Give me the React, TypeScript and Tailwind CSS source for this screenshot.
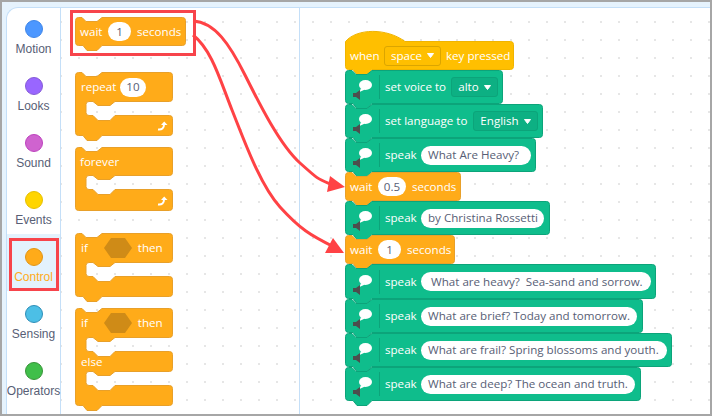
import type { ReactNode } from "react";

const ORANGE = { fill: "#ffab19", stroke: "#e8a02a" };
const GREEN = { fill: "#0fbd8c", stroke: "#0ca47a" };
const YELLOW = { fill: "#ffbf00", stroke: "#f0b400" };

const categories = [
  { label: "Motion", dot: "bg-[#4c97ff] border-[#3f86e8]" },
  { label: "Looks", dot: "bg-[#9966ff] border-[#855cd6]" },
  { label: "Sound", dot: "bg-[#cf63cf] border-[#bd42bd]" },
  { label: "Events", dot: "bg-[#ffd500] border-[#e6bf00]" },
  { label: "Control", dot: "bg-[#ffab19] border-[#e09516]", active: true },
  { label: "Sensing", dot: "bg-[#4cbfe6] border-[#2e8eb8]" },
  { label: "Operators", dot: "bg-[#40bf4a] border-[#389438]" },
];

// sections = arm, gap, arm, gap, arm ... (a plain stack block has a single arm)
function blockPath(w: number, sections: number[], bump: boolean, hat: boolean) {
  const r = 3;
  const x0 = 0.5;
  const right = w - 0.5;
  let d = "";
  let y = 0.5;

  if (hat) {
    y = 10.5;
    d += `M ${x0} ${y} C 12 -3 42 -3 60 ${y} H ${right - r} Q ${right} ${y} ${right} ${y + r} `;
  } else {
    d += `M ${x0} ${y + r} Q ${x0} ${y} ${x0 + r} ${y} H 7 L 11 4.5 H 22 L 27 ${y} H ${right - r} Q ${right} ${y} ${right} ${y + r} `;
  }

  let bottom = 0;
  sections.forEach((s, i) => {
    bottom += s;
    const by = bottom - 0.5;
    const last = i === sections.length - 1;
    if (i % 2 === 0) {
      d += `V ${by - r} Q ${right} ${by} ${right - r} ${by} `;
      if (last) {
        if (bump) d += `H 27 L 22 ${by + 5} H 12 L 8 ${by} `;
        d += `H ${x0 + r} Q ${x0} ${by} ${x0} ${by - r} Z`;
      } else {
        d += `H 40 L 35 ${by + 4} H 23 L 18 ${by} H 14 Q 11 ${by} 11 ${by + r} `;
      }
    } else {
      d += `V ${by - r} Q 11 ${by} 14 ${by} H 18 L 23 ${by + 5} H 35 L 40 ${by} H ${right - r} Q ${right} ${by} ${right} ${by + r} `;
    }
  });
  return d;
}

type BlockProps = {
  w: number;
  sections: number[];
  color: { fill: string; stroke: string };
  bump?: boolean;
  hat?: boolean;
  children?: ReactNode;
};

const Block = ({ w, sections, color, bump = true, hat = false, children }: BlockProps) => {
  const h = sections.reduce((a, b) => a + b, 0);
  return (
    <div className="grid w-fit whitespace-nowrap font-['Open_Sans',sans-serif] text-[11.6px] text-white">
      <svg width={w} height={h} className="col-start-1 row-start-1 block overflow-visible">
        <path d={blockPath(w, sections, bump, hat)} fill={color.fill} stroke={color.stroke} />
      </svg>
      <div className="col-start-1 row-start-1 flex min-w-0 flex-col">{children}</div>
    </div>
  );
};

const Pill = ({ children, className = "" }: { children: ReactNode; className?: string }) => (
  <span className={`flex h-[19px] items-center whitespace-pre rounded-full bg-white text-[#575e75] ${className}`}>
    {children}
  </span>
);

const Caret = () => (
  <svg width="7" height="5" viewBox="0 0 7 5" className="ml-[5px]">
    <path d="M0.5 0.5 H6.5 L3.5 4.5 Z" fill="#fff" stroke="#fff" strokeLinejoin="round" />
  </svg>
);

const Wait = ({ value, w, pill }: { value: string; w: number; pill: string }) => (
  <Block w={w} sections={[29]} color={ORANGE}>
    <div className="flex h-[29px] items-center gap-[6px] pl-[5px]">
      <span className="w-[22px]">wait</span>
      <Pill className={`h-[18px] justify-center ${pill}`}>{value}</Pill>
      <span>seconds</span>
    </div>
  </Block>
);

const SpeechIcon = () => (
  <svg width="35" height="34" className="shrink-0">
    <ellipse cx="20.5" cy="15" rx="6.5" ry="5" fill="#fff" />
    <path d="M16 18 L14.5 22 L20 19.5 Z" fill="#fff" />
    <path d="M8 23 L11 23 L15 20 V30 L11 27 L8 27 Z" fill="#4d4d4d" />
    <line x1="34.5" y1="5" x2="34.5" y2="29" stroke="#0ca47a" />
  </svg>
);

const Speech = ({ w, h = 34, children }: { w: number; h?: number; children: ReactNode }) => (
  <Block w={w} sections={[h]} color={GREEN}>
    <div className="flex h-full items-center gap-[5px]">
      <SpeechIcon />
      {children}
    </div>
  </Block>
);

const Speak = ({ w, h, pill, text }: { w: number; h?: number; pill: string; text: string }) => (
  <Speech w={w} h={h}>
    <span className="w-[31px]">speak</span>
    <Pill className={`pl-[7px] ${pill}`}>{text}</Pill>
  </Speech>
);

const Hexagon = () => (
  <svg width="28" height="20" className="ml-[16px] mr-[6px] shrink-0">
    <path d="M7 0 H21 L28 10 L21 20 H7 L0 10 Z" fill="#cf8b17" />
  </svg>
);

const LoopArrow = () => (
  <svg width="11" height="10" viewBox="0 0 11 10" className="mb-[5px] ml-auto mr-[5px]">
    <path d="M1 8.5 C5 9 7 7 7 3.5" fill="none" stroke="#fff" strokeWidth="2" />
    <path d="M4 4 L7.2 0.5 L10.5 4 Z" fill="#fff" />
  </svg>
);

const Dropdown = ({ label, border, className }: { label: string; border: string; className: string }) => (
  <span className={`flex h-[20px] items-center justify-center rounded-[3px] border ${border} ${className}`}>
    {label}
    <Caret />
  </span>
);

const Arrows = () => (
  <svg width="712" height="416" className="pointer-events-none absolute left-0 top-0">
    <path d="M193 21 C 215 22 230 45 245 75 S 280 145 300 163 S 318 179 333 185" fill="none" stroke="#ff4245" strokeWidth="3" />
    <path d="M345 187 L330 176 L327 192 Z" fill="#ff4245" />
    <path d="M193 35 C 212 50 220 80 232 110 S 260 185 280 207 S 310 235 334 247" fill="none" stroke="#ff4245" strokeWidth="3" />
    <path d="M344 253 L333 238 L325 253 Z" fill="#ff4245" />
  </svg>
);

const App = () => {
  return (
    <div className="relative h-[416px] w-[712px] overflow-hidden border-2 border-[#a6a6a6] bg-[#e6f3fd] pl-[4px] pt-[5px]">
      <div className="flex h-full overflow-hidden rounded-tl-[12px] border-l border-t border-[#c4dff8] bg-white">
        {/* Category sidebar */}
        <ul className="h-full w-[54px] shrink-0 border-r border-[#c4dff8] font-['Liberation_Sans',sans-serif] text-[12px] text-[#575e75]">
          {categories.map((c, i) => (
            <li
              key={c.label}
              className={`relative flex h-[57px] flex-col items-center pt-[14px] ${i === 0 ? "-mt-[2px]" : ""} ${
                c.active ? "bg-[#e3f2fd] text-[#ffab19]" : ""
              }`}
            >
              <span className={`ml-[1px] h-[18px] w-[18px] shrink-0 rounded-full border ${c.dot}`} />
              <span className="mt-[2px] whitespace-nowrap leading-[18px]">{c.label}</span>
              {c.active && <span className="absolute left-[2px] top-[4px] h-[53px] w-[50px] border-[3px] border-[#f7444b]" />}
            </li>
          ))}
        </ul>

        <div className="flex min-w-0 flex-1 bg-[radial-gradient(circle,#e6e6e6_1px,transparent_1.2px)] bg-[size:18px_18px] bg-[position:-9px_5px]">
          {/* Block palette */}
          <div className="w-[239px] shrink-0 border-r border-[#c4dff8] pl-[9px] pt-[2px]">
            <div className="h-[46px] w-[126px] border-[3px] border-[#f7444b] pl-[2px] pt-[4px]">
              <Wait value="1" w={111} pill="w-[23px]" />
            </div>

            <div className="ml-[5px] mt-[16px] flex flex-col">
              <Block w={98} sections={[30, 14, 20]} color={ORANGE}>
                <div className="flex h-[30px] items-center gap-[5px] pl-[6px]">
                  <span className="w-[34px]">repeat</span>
                  <Pill className="h-[18px] w-[26px] justify-center">10</Pill>
                </div>
                <div className="mt-auto flex">
                  <LoopArrow />
                </div>
              </Block>

              <div className="mt-[11px]">
                <Block w={98} sections={[29, 14, 21]} color={ORANGE} bump={false}>
                  <div className="flex h-[29px] items-center pl-[5px]">forever</div>
                  <div className="mt-auto flex">
                    <LoopArrow />
                  </div>
                </Block>
              </div>

              <div className="mt-[22px]">
                <Block w={98} sections={[30, 14, 20]} color={ORANGE}>
                  <div className="flex h-[30px] items-center pl-[6px]">
                    <span>if</span>
                    <Hexagon />
                    <span>then</span>
                  </div>
                </Block>
              </div>

              <div className="mt-[11px]">
                <Block w={98} sections={[30, 14, 20, 14, 20]} color={ORANGE}>
                  <div className="flex h-[30px] items-center pl-[6px]">
                    <span>if</span>
                    <Hexagon />
                    <span>then</span>
                  </div>
                  <div className="mt-[14px] flex h-[20px] items-center pl-[6px]">else</div>
                </Block>
              </div>
            </div>
          </div>

          {/* Script workspace */}
          <div className="flex flex-1 flex-col pl-[45px] pt-[23px]">
            <Block w={169} sections={[39]} color={YELLOW} hat>
              <div className="mt-[10px] flex h-[29px] items-center gap-[5px] pl-[5px]">
                <span className="w-[29px]">when</span>
                <Dropdown label="space" border="border-[#dba500]" className="w-[57px]" />
                <span>key pressed</span>
              </div>
            </Block>
            <Speech w={158}>
              <span className="w-[61px]">set voice to</span>
              <Dropdown label="alto" border="border-[#0ca47a] bg-[#0db083]" className="w-[47px]" />
            </Speech>
            <Speech w={198}>
              <span className="w-[83px]">set language to</span>
              <Dropdown label="English" border="border-[#0ca47a] bg-[#0db083]" className="w-[65px]" />
            </Speech>
            <Speak w={191} pill="w-[110px]" text="What Are Heavy?" />
            <Wait value="0.5" w={116} pill="w-[28px]" />
            <Speak w={205} pill="w-[123px]" text="by Christina Rossetti" />
            <Wait value="1" w={110} pill="w-[23px]" />
            <Speak w={311} h={35} pill="w-[230px]" text=" What are heavy?  Sea-sand and sorrow." />
            <Speak w={298} pill="w-[216px]" text="What are brief? Today and tomorrow." />
            <Speak w={327} pill="w-[246px]" text="What are frail? Spring blossoms and youth." />
            <Speak w={296} pill="w-[214px]" text="What are deep? The ocean and truth." />
          </div>
        </div>
      </div>
      <div className="absolute -left-[2px] -top-[2px]">
        <Arrows />
      </div>
    </div>
  );
};

export default App;
